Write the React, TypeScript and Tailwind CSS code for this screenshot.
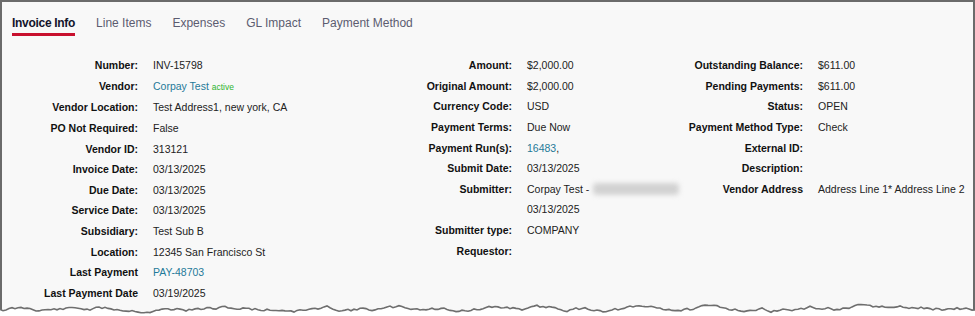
import type { ReactNode } from 'react';

type Field = { label: string; value?: ReactNode };

const TABS = ['Invoice Info', 'Line Items', 'Expenses', 'GL Impact', 'Payment Method'];

const LINK = 'text-[#1f7a99]';

const COL_ONE: Field[] = [
  { label: 'Number:', value: 'INV-15798' },
  {
    label: 'Vendor:',
    value: (
      <>
        <span className={LINK}>Corpay Test</span>{' '}
        <span className="text-[8.5px] text-[#2fb52f]">active</span>
      </>
    ),
  },
  { label: 'Vendor Location:', value: 'Test Address1, new york, CA' },
  { label: 'PO Not Required:', value: 'False' },
  { label: 'Vendor ID:', value: '313121' },
  { label: 'Invoice Date:', value: '03/13/2025' },
  { label: 'Due Date:', value: '03/13/2025' },
  { label: 'Service Date:', value: '03/13/2025' },
  { label: 'Subsidiary:', value: 'Test Sub B' },
  { label: 'Location:', value: '12345 San Francisco St' },
  { label: 'Last Payment', value: <span className={LINK}>PAY-48703</span> },
  { label: 'Last Payment Date', value: '03/19/2025' },
];

const COL_TWO: Field[] = [
  { label: 'Amount:', value: '$2,000.00' },
  { label: 'Original Amount:', value: '$2,000.00' },
  { label: 'Currency Code:', value: 'USD' },
  { label: 'Payment Terms:', value: 'Due Now' },
  {
    label: 'Payment Run(s):',
    value: (
      <>
        <span className={LINK}>16483</span>,
      </>
    ),
  },
  { label: 'Submit Date:', value: '03/13/2025' },
  {
    label: 'Submitter:',
    value: (
      <>
        <div className="flex items-center">
          Corpay Test -
          {/* redacted email */}
          <span className="ml-[4px] inline-block h-[12px] w-[86px] rounded-sm bg-[#d2d2d2] blur-[2.5px]" />
        </div>
        <div>03/13/2025</div>
      </>
    ),
  },
  { label: 'Submitter type:', value: 'COMPANY' },
  { label: 'Requestor:' },
];

const COL_THREE: Field[] = [
  { label: 'Outstanding Balance:', value: '$611.00' },
  { label: 'Pending Payments:', value: '$611.00' },
  { label: 'Status:', value: 'OPEN' },
  { label: 'Payment Method Type:', value: 'Check' },
  { label: 'External ID:' },
  { label: 'Description:' },
  { label: 'Vendor Address', value: 'Address Line 1* Address Line 2' },
];

function FieldColumn({
  fields,
  width,
  labelCols,
}: {
  fields: Field[];
  width: string;
  labelCols: string;
}) {
  return (
    <div className={`grid content-start gap-x-[15px] ${width} ${labelCols}`}>
      {fields.map((f) => (
        <div key={f.label} className="contents">
          <div className="whitespace-nowrap text-right font-bold text-[#111]">{f.label}</div>
          <div className="whitespace-nowrap text-[#222]">{f.value}</div>
        </div>
      ))}
    </div>
  );
}

// jagged "torn paper" edge along the bottom
function tearPath() {
  let seed = 11;
  const rnd = () => {
    seed = (seed * 9301 + 49297) % 233280;
    return seed / 233280;
  };
  const pts: string[] = [];
  let y = 309;
  for (let x = 0; x <= 975; x += 3) {
    y += (rnd() - 0.5) * 3.6;
    y += (309 - y) * 0.12;
    pts.push(`${x},${y.toFixed(1)}`);
  }
  return pts;
}

const TEAR = tearPath();

export default function App() {
  return (
    <div
      className="relative h-[316px] w-[975px] overflow-hidden bg-white text-[10.5px] leading-[20.64px]"
      style={{ fontFamily: '"Liberation Sans", Arial, sans-serif' }}
    >
      <div className="h-[316px] border-2 border-b-0 border-[#6b6b6b] bg-[#f8f8f8]">
        {/* Tabs */}
        <div className="flex gap-x-[21px] pl-[10px] pt-[14px] text-[12px] leading-[15px]">
          {TABS.map((t, i) => (
            <div
              key={t}
              className={
                i === 0
                  ? 'border-b-[3px] border-[#c8102e] pb-[2px] font-semibold tracking-[-0.3px] text-[#14142b]'
                  : 'border-b-[3px] border-transparent pb-[2px] text-[#5c5c70]'
              }
            >
              {t}
            </div>
          ))}
        </div>

        {/* Fields */}
        <div className="mt-[19px] flex">
          <FieldColumn fields={COL_ONE} width="w-[310px]" labelCols="grid-cols-[136px_1fr]" />
          <FieldColumn fields={COL_TWO} width="w-[340px]" labelCols="grid-cols-[200px_1fr]" />
          <FieldColumn fields={COL_THREE} width="w-[321px]" labelCols="grid-cols-[151px_1fr]" />
        </div>
      </div>

      <svg className="absolute left-0 top-0" width="975" height="316" viewBox="0 0 975 316">
        <polygon points={`${TEAR.join(' ')} 975,316 0,316`} fill="#ffffff" />
        <polyline points={TEAR.join(' ')} fill="none" stroke="#6e6e6e" strokeWidth="1.6" />
      </svg>
    </div>
  );
}
